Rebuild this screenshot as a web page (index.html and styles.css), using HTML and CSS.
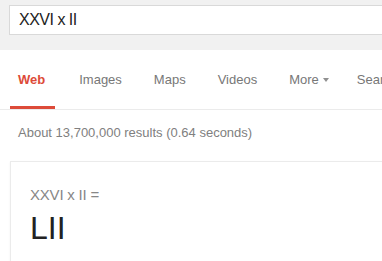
FILE: index.html
```html
<!DOCTYPE html>
<html lang="en">
<head>
    <meta charset="UTF-8">
    <meta name="viewport" content="width=device-width, initial-scale=1.0">
    <title>XXVI x II - Search</title>
    <link rel="stylesheet" href="styles.css">
</head>
<body>
    <div class="header">
        <div class="searchbox">XXVI x II</div>
    </div>

    <div class="tabs">
        <div class="tab active">Web</div>
        <div class="tab">Images</div>
        <div class="tab">Maps</div>
        <div class="tab">Videos</div>
        <div class="tab more">More<span class="arrow"></span></div>
        <div class="tab">Search tools</div>
    </div>

    <div class="stats">About 13,700,000 results (0.64 seconds)</div>

    <div class="card">
        <div class="expr">XXVI x II =</div>
        <div class="answer">LII</div>
    </div>
</body>
</html>
```

FILE: styles.css
```css
body {
    margin: 0;
    font-family: "Liberation Sans", Arial, sans-serif;
    background-color: #fff;
    overflow: hidden;
}
.header {
    height: 50px;
    background-color: #f1f1f1;
    padding-top: 5px;
    box-sizing: border-box;
}
.searchbox {
    margin-left: 9px;
    width: 520px;
    height: 30px;
    box-sizing: border-box;
    border: 1px solid #d9d9d9;
    background-color: #fff;
    padding-left: 9px;
    font-size: 16px;
    line-height: 28px;
    letter-spacing: -0.5px;
    color: #222;
    white-space: nowrap;
}
.tabs {
    display: flex;
    padding-left: 10px;
    border-bottom: 1px solid #ebebeb;
    white-space: nowrap;
}
.tab {
    font-size: 13px;
    line-height: 16px;
    color: #777;
    padding: 22px 8px 18px;
    margin-right: 16px;
    border-bottom: 3px solid transparent;
}
.tab.active {
    color: #dd4b39;
    font-weight: bold;
    padding-right: 10px;
    border-bottom-color: #dd4b39;
}
.tab.more {
    padding-right: 4px;
}
.arrow {
    display: inline-block;
    vertical-align: top;
    margin: 6px 0 0 4px;
    border-left: 3.5px solid transparent;
    border-right: 3.5px solid transparent;
    border-top: 4px solid #909090;
}
.stats {
    margin: 15px 0 0 18px;
    font-size: 13px;
    line-height: 16px;
    color: #808080;
}
.card {
    margin: 20px 0 0 10px;
    width: 500px;
    height: 120px;
    border: 1px solid #ebebeb;
    box-shadow: 0 1px 2px rgba(0, 0, 0, 0.06);
    padding: 23px 19px 0;
    box-sizing: border-box;
}
.expr {
    font-size: 15px;
    line-height: 20px;
    letter-spacing: -0.2px;
    color: #878787;
}
.answer {
    margin-top: 5px;
    font-size: 32px;
    line-height: 36px;
    color: #222;
}
```
